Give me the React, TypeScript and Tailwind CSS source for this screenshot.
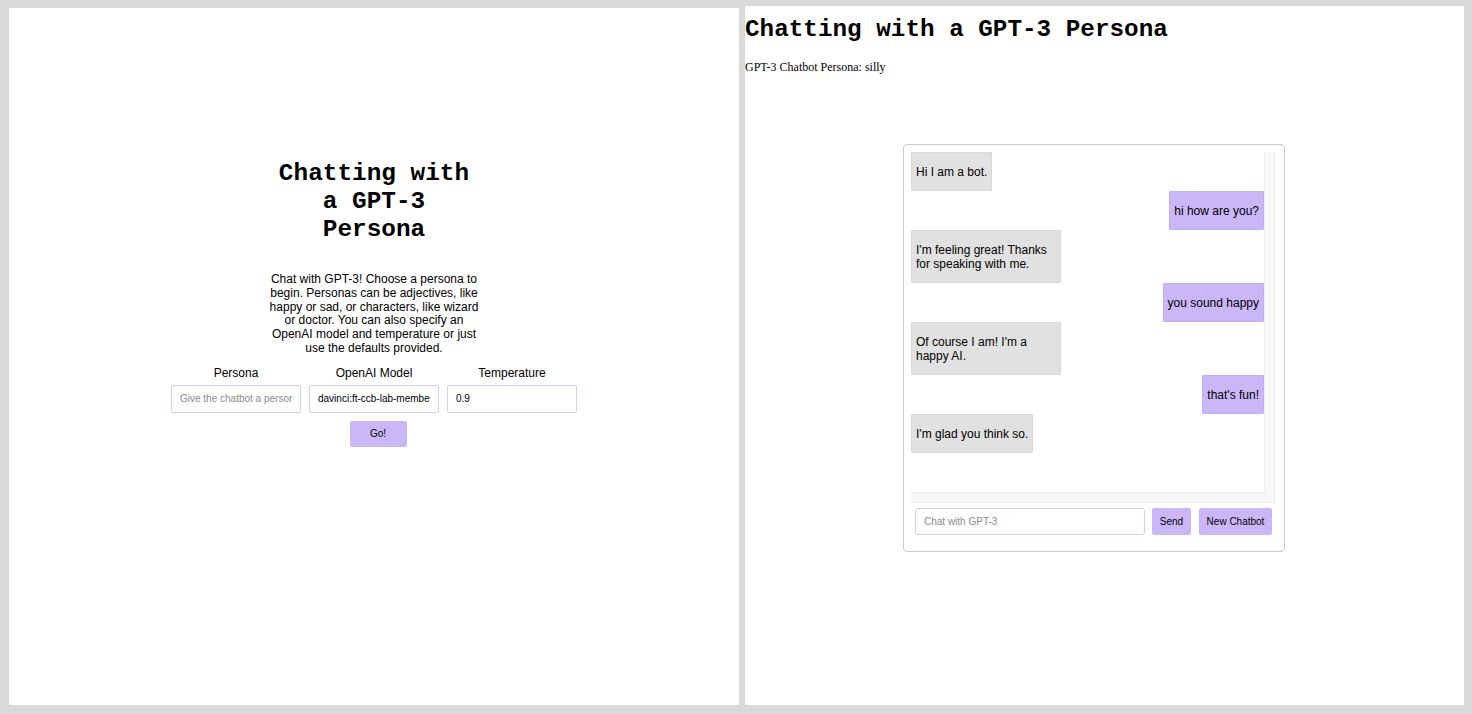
import React from "react";

const sans = { fontFamily: '"Liberation Sans", Arial, sans-serif' };

const messages: { from: "bot" | "user"; text: string }[] = [
  { from: "bot", text: "Hi I am a bot." },
  { from: "user", text: "hi how are you?" },
  { from: "bot", text: "I'm feeling great! Thanks for speaking with me." },
  { from: "user", text: "you sound happy" },
  { from: "bot", text: "Of course I am! I'm a happy AI." },
  { from: "user", text: "that's fun!" },
  { from: "bot", text: "I'm glad you think so." },
];

function Field({ label, placeholder, value }: { label: string; placeholder?: string; value?: string }) {
  return (
    <div className="flex flex-col items-center">
      <div className="text-[12px] leading-[14px] text-black">{label}</div>
      <input
        readOnly
        placeholder={placeholder}
        defaultValue={value}
        className="mt-[5px] w-[130px] h-[28px] border border-[#d9cafa] rounded-[2px] px-[8px] text-[10px] text-black placeholder:text-[#8a8a8a] outline-none bg-white"
        style={sans}
      />
    </div>
  );
}

export default function App() {
  return (
    <div className="w-[1472px] h-[714px] bg-[#d9d9d9] flex overflow-hidden" style={sans}>
      {/* Left panel */}
      <div className="ml-[9px] mt-[8px] w-[730px] h-[697px] bg-white flex flex-col items-center pt-[152px]">
        <h1
          className="w-[200px] text-center text-[24.4px] leading-[28px] font-bold text-black"
          style={{ fontFamily: '"Liberation Mono", "Courier New", monospace' }}
        >
          Chatting with a GPT-3 Persona
        </h1>
        <p className="mt-[29px] w-[222px] text-center text-[12px] leading-[13.8px] text-black">
          Chat with GPT-3! Choose a persona to begin. Personas can be adjectives, like happy or sad, or characters, like wizard or doctor. You can also specify an OpenAI model and temperature or just use the defaults provided.
        </p>
        <div className="mt-[10px] flex gap-[8px]">
          <Field label="Persona" placeholder="Give the chatbot a persona" />
          <Field label="OpenAI Model" value="davinci:ft-ccb-lab-members-2022-12-14" />
          <Field label="Temperature" value="0.9" />
        </div>
        <button className="mt-[8px] ml-[8px] w-[57px] h-[26px] bg-[#cbb7f8] rounded-[2px] text-[10px] text-black">
          Go!
        </button>
      </div>

      {/* Right panel */}
      <div className="ml-[6px] mt-[6px] w-[719px] h-[699px] bg-white flex flex-col items-start">
        <h1
          className="mt-[10px] text-[24.3px] leading-[28px] font-bold text-black"
          style={{ fontFamily: '"Liberation Mono", "Courier New", monospace' }}
        >
          Chatting with a GPT-3 Persona
        </h1>
        <div
          className="mt-[16px] text-[12px] leading-[14px] text-black"
          style={{ fontFamily: '"Liberation Serif", "Times New Roman", serif' }}
        >
          GPT-3 Chatbot Persona: silly
        </div>

        <div className="mt-[70px] ml-[158px] w-[382px] border border-[#cacaca] rounded-[4px] pt-[7px] px-[7px] pb-[16px] flex flex-col">
          <div className="w-[364px] h-[351px] bg-[#f8f8f8] border-r border-b border-[#ededed] flex flex-col">
            <div className="flex">
              <div className="w-[354px] h-[341px] bg-white border-r border-b border-[#efefef] flex flex-col">
                {messages.map((m, i) => (
                  <div key={i} className={m.from === "bot" ? "flex justify-start" : "flex justify-end"}>
                    <div
                      className={
                        m.from === "bot"
                          ? "max-w-[150px] bg-[#e1e1e1] border border-[#d8d8d8] py-[11.5px] px-[4px] text-[12px] leading-[14px] text-black rounded-[1px]"
                          : "max-w-[150px] bg-[#cbb7f8] border border-[#c3aef2] py-[11.5px] px-[4px] text-[12px] leading-[14px] text-black rounded-[1px]"
                      }
                    >
                      {m.text}
                    </div>
                  </div>
                ))}
              </div>
            </div>
          </div>
          <div className="mt-[5px] flex items-center">
            <input
              readOnly
              placeholder="Chat with GPT-3"
              className="ml-[4px] w-[230px] h-[27px] border border-[#d9cafa] rounded-[3px] px-[8px] text-[10px] placeholder:text-[#8a8a8a] outline-none bg-white"
              style={sans}
            />
            <button className="ml-[7px] w-[39px] h-[27px] bg-[#cbb7f8] rounded-[2px] text-[10px] text-black">
              Send
            </button>
            <button className="ml-[8px] w-[73px] h-[27px] bg-[#cbb7f8] rounded-[2px] text-[10px] text-black">
              New Chatbot
            </button>
          </div>
        </div>
      </div>
    </div>
  );
}
